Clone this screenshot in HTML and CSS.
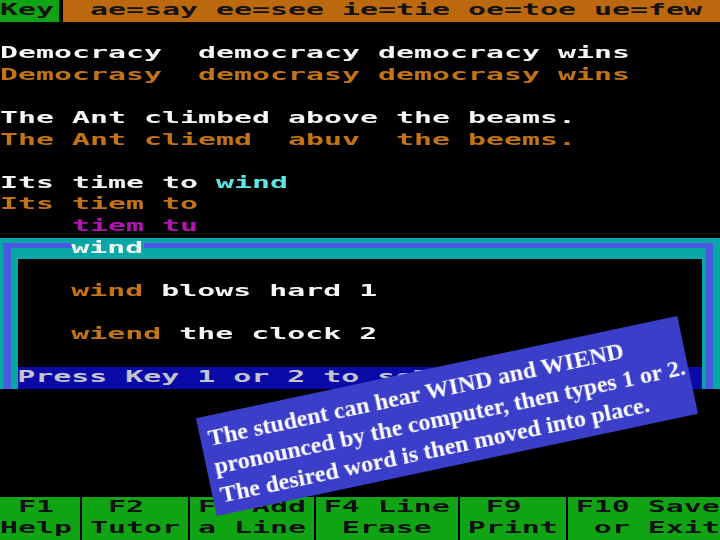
FILE: index.html
```html
<!DOCTYPE html>
<html lang="en">
<head>
<meta charset="utf-8">
<title>Spelling Tutor</title>
<link rel="stylesheet" href="styles.css">
</head>
<body>
<div class="screen">
  <div class="term">
    <div class="row keybar"><span class="key">Key</span><span class="keysep"></span><span class="keytext">ae=say ee=see ie=tie oe=toe ue=few</span></div>
    <div class="row"></div>
    <div class="row white">Democracy  democracy democracy wins</div>
    <div class="row orange">Democrasy  democrasy democrasy wins</div>
    <div class="row"></div>
    <div class="row white">The Ant climbed above the beams.</div>
    <div class="row orange">The Ant cliemd  abuv  the beems.</div>
    <div class="row"></div>
    <div class="row white">Its time to <span class="cyan">wind</span></div>
    <div class="row orange">Its tiem to</div>
    <div class="row magenta">    tiem tu</div>
    <div class="box">
      <div class="box-frame">
        <div class="row box-title"><span class="title">wind</span></div>
        <div class="box-body">
          <div class="row"></div>
          <div class="row white">   <span class="orange">wind</span> blows hard 1</div>
          <div class="row"></div>
          <div class="row white">   <span class="orange">wiend</span> the clock 2</div>
          <div class="row"></div>
          <div class="row prompt">Press Key 1 or 2 to select</div>
        </div>
      </div>
    </div>
    <div class="spacer"></div>
    <div class="footer">
      <div class="fcell w4"><div class="row"> F1 </div><div class="row">Help</div></div>
      <div class="fsep"></div>
      <div class="fcell w5"><div class="row"> F2  </div><div class="row">Tutor</div></div>
      <div class="fsep"></div>
      <div class="fcell w6"><div class="row">F3 Add</div><div class="row">a Line</div></div>
      <div class="fsep"></div>
      <div class="fcell w7"><div class="row">F4 Line</div><div class="row"> Erase </div></div>
      <div class="fsep"></div>
      <div class="fcell w5"><div class="row"> F9  </div><div class="row">Print</div></div>
      <div class="fsep"></div>
      <div class="fcell w8"><div class="row">F10 Save</div><div class="row"> or Exit</div></div>
    </div>
  </div>
  <div class="banner">
    <div>The student can hear WIND and WIEND</div>
    <div>pronounced by the computer, then types 1 or 2.</div>
    <div>The desired word is then moved into place.</div>
  </div>
</div>
</body>
</html>
```
FILE: styles.css
```css
html, body {
  margin: 0;
  padding: 0;
  background: #000;
}

.screen {
  position: relative;
  width: 720px;
  height: 540px;
  overflow: hidden;
  background: #000;
}

/* 40 x 25 text grid: one column = 1ch (10px) scaled to 18px */
.term {
  width: 40ch;
  height: 540px;
  font-family: "DejaVu Sans Mono", monospace;
  font-weight: bold;
  font-size: 16.61px;
  line-height: 20.1px;
  color: #f6f6f6;
  transform: scaleX(1.8);
  transform-origin: 0 0;
}

.row {
  height: 21.6px;
  white-space: pre;
  overflow: hidden;
}

.white { color: #f6f6f6; }
.orange { color: #c47414; }
.cyan { color: #5ce6e6; }
.magenta { color: #b414b4; }

/* top key bar */
.keybar {
  display: flex;
  color: #121212;
}
.key {
  width: 3.3333ch;
  background: #10a414;
}
.keysep {
  width: 0.1667ch;
  background: #000;
}
.keytext {
  flex: 1;
  padding-left: 1.5ch;
  background: #bb680e;
}

/* selection box */
.box {
  box-sizing: border-box;
  height: 151.2px;
  padding-top: 5.4px;
  padding-left: 0.1667ch;
  padding-right: 0.3889ch;
  background: #08a6a6;
}
.box-frame {
  box-sizing: border-box;
  height: 145.8px;
  border-top: 5px solid #4a58e4;
  border-left: 0.4444ch solid #4a58e4;
  border-right: 0.4444ch solid #4a58e4;
  background: #08a6a6;
}
.box-title {
  margin-top: -10.4px;
  padding-left: 3.3889ch;
}
.title {
  background: #08a6a6;
  color: #f6f6f6;
}
.box-body {
  margin-left: 0.3889ch;
  margin-right: 0.1667ch;
  background: #000;
}
.prompt {
  background: #0a0aa8;
  color: #c4c4cc;
}

.spacer {
  height: 108px;
}

/* function key bar */
.footer {
  display: flex;
  height: 43.2px;
  background: #10a414;
  color: #101010;
}
.fcell { flex: none; }
.w4 { width: 4ch; }
.w5 { width: 5ch; }
.w6 { width: 6ch; }
.w7 { width: 7ch; }
.w8 { width: 8ch; }
.fsep {
  flex: none;
  width: 1ch;
  background: linear-gradient(90deg, transparent 0.42ch, #000 0.42ch, #000 0.58ch, transparent 0.58ch);
}

/* caption overlay */
.banner {
  position: absolute;
  left: 201px;
  top: 366px;
  width: 492px;
  height: 100px;
  box-sizing: border-box;
  padding: 8px 8px;
  background: #3b3ec8;
  color: #fff;
  font-family: "Liberation Serif", "Times New Roman", serif;
  font-weight: bold;
  font-size: 24px;
  line-height: 29px;
  white-space: nowrap;
  transform: rotate(-12deg);
}
```
